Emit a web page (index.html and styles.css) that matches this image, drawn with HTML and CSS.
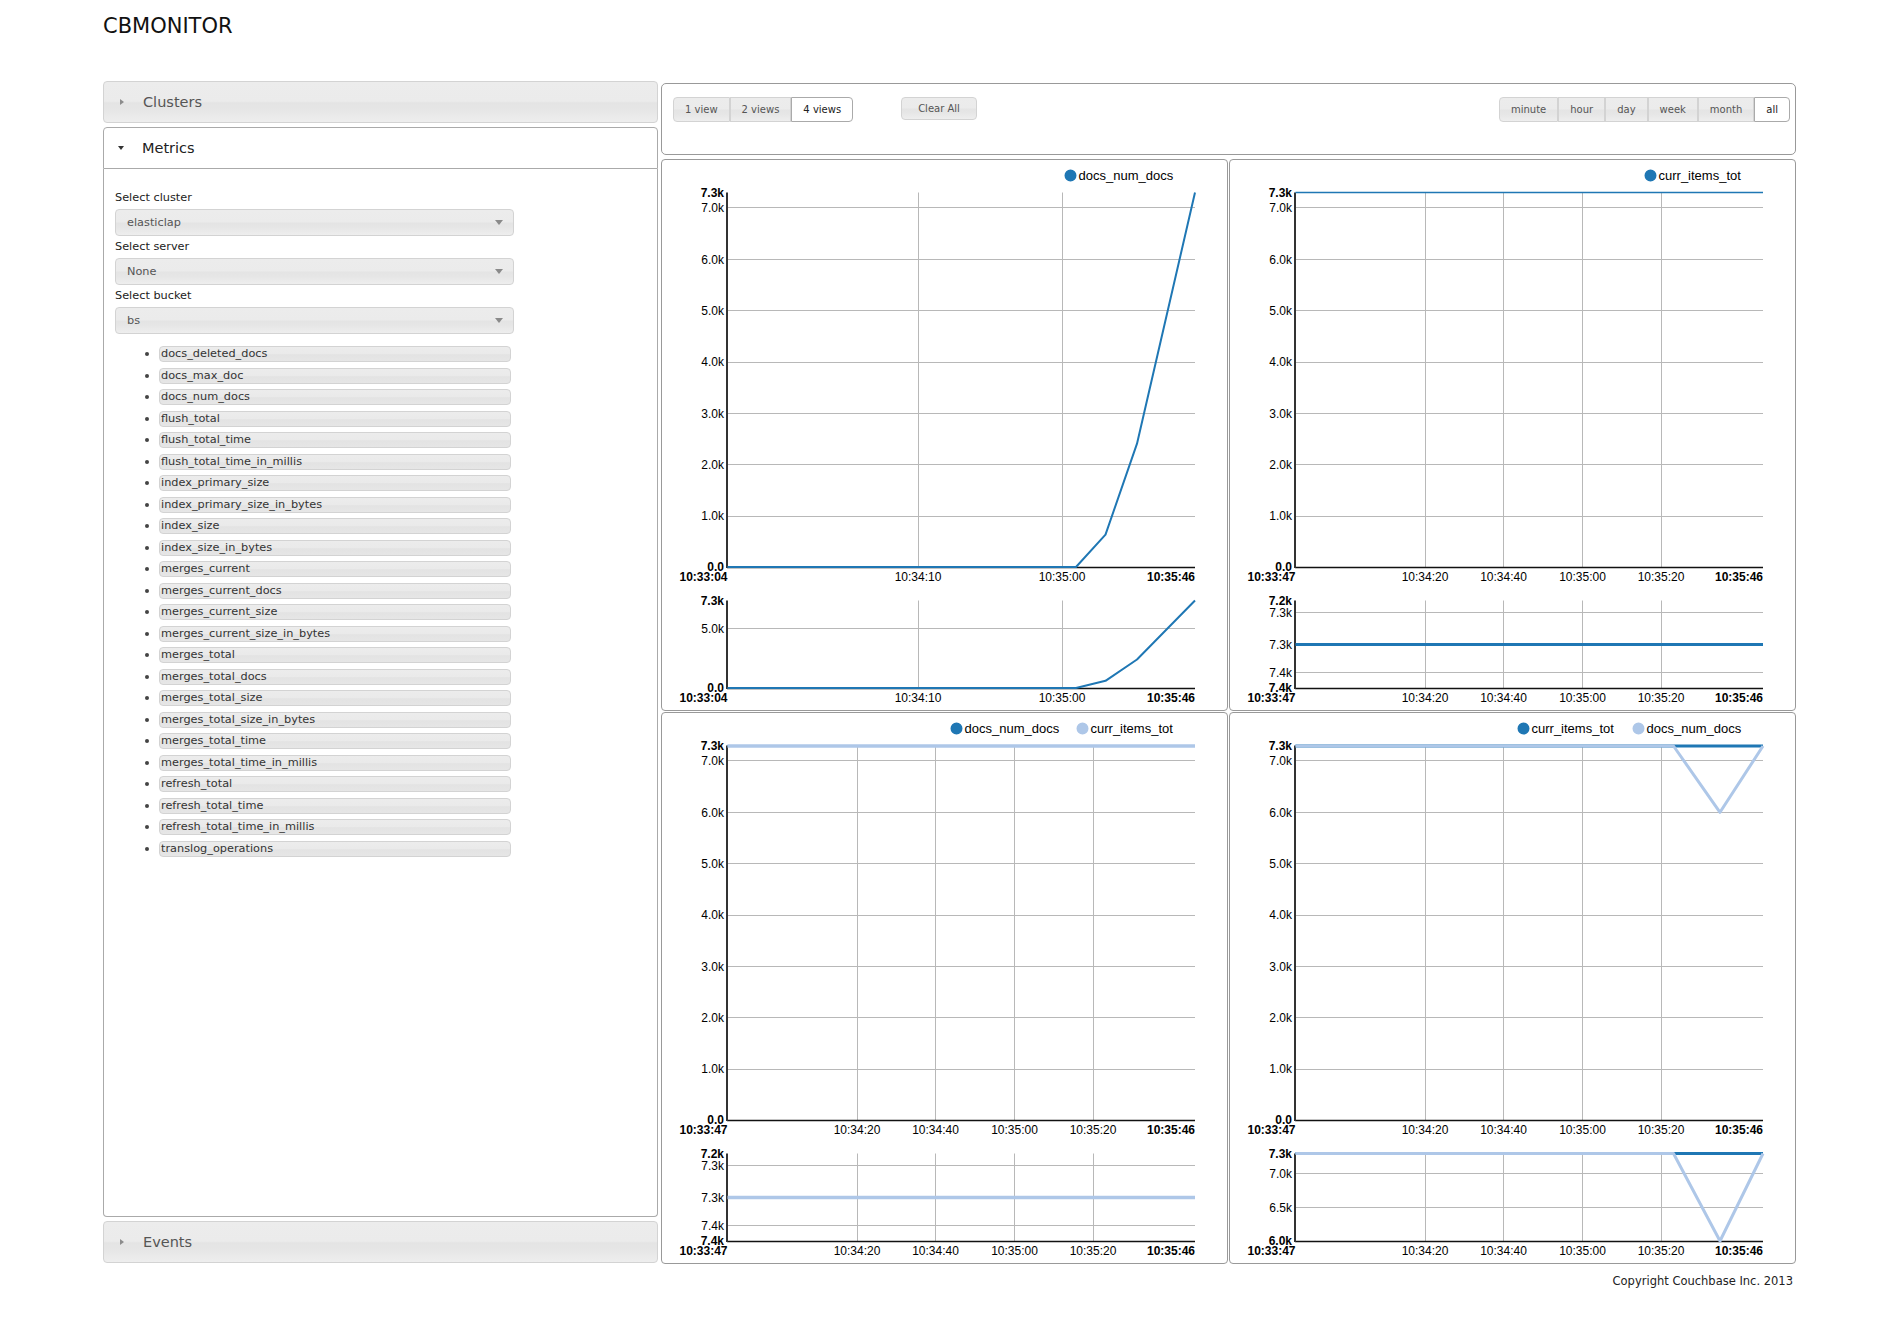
FILE: index.html
```html
<!DOCTYPE html>
<html>
<head>
<meta charset="utf-8">
<title>CBMONITOR</title>
<link rel="stylesheet" href="styles.css">
</head>
<body>
<div class="page">
  <h1 class="title">CBMONITOR</h1>
  <div class="main">
    <aside class="sidebar">
      <div class="acc-header"><span class="tri-e"></span><span class="acc-title">Clusters</span></div>
      <div class="acc-header active"><span class="tri-s"></span><span class="acc-title">Metrics</span></div>
      <div class="acc-content">
        <label class="field-label">Select cluster</label>
        <div class="select">elasticlap<span class="sel-arrow"></span></div>
        <label class="field-label">Select server</label>
        <div class="select">None<span class="sel-arrow"></span></div>
        <label class="field-label">Select bucket</label>
        <div class="select">bs<span class="sel-arrow"></span></div>
        <ul class="metric-list">
          <li><span class="pill">docs_deleted_docs</span></li>
          <li><span class="pill">docs_max_doc</span></li>
          <li><span class="pill">docs_num_docs</span></li>
          <li><span class="pill">flush_total</span></li>
          <li><span class="pill">flush_total_time</span></li>
          <li><span class="pill">flush_total_time_in_millis</span></li>
          <li><span class="pill">index_primary_size</span></li>
          <li><span class="pill">index_primary_size_in_bytes</span></li>
          <li><span class="pill">index_size</span></li>
          <li><span class="pill">index_size_in_bytes</span></li>
          <li><span class="pill">merges_current</span></li>
          <li><span class="pill">merges_current_docs</span></li>
          <li><span class="pill">merges_current_size</span></li>
          <li><span class="pill">merges_current_size_in_bytes</span></li>
          <li><span class="pill">merges_total</span></li>
          <li><span class="pill">merges_total_docs</span></li>
          <li><span class="pill">merges_total_size</span></li>
          <li><span class="pill">merges_total_size_in_bytes</span></li>
          <li><span class="pill">merges_total_time</span></li>
          <li><span class="pill">merges_total_time_in_millis</span></li>
          <li><span class="pill">refresh_total</span></li>
          <li><span class="pill">refresh_total_time</span></li>
          <li><span class="pill">refresh_total_time_in_millis</span></li>
          <li><span class="pill">translog_operations</span></li>
        </ul>
      </div>
      <div class="acc-header events"><span class="tri-e"></span><span class="acc-title">Events</span></div>
    </aside>

    <section class="right">
      <div class="toolbar">
        <div class="btnset">
          <button class="btn">1 view</button>
          <button class="btn">2 views</button>
          <button class="btn on">4 views</button>
        </div>
        <button class="btn single">Clear All</button>
        <div class="spacer"></div>
        <div class="btnset">
          <button class="btn">minute</button>
          <button class="btn">hour</button>
          <button class="btn">day</button>
          <button class="btn">week</button>
          <button class="btn">month</button>
          <button class="btn on">all</button>
        </div>
      </div>

      <div class="charts">
        <!-- top left -->
        <div class="panel">
          <svg class="chart" width="565" height="550" viewBox="1 1 565 550">
            <g class="legend">
              <circle class="d1" cx="409.5" cy="16.5" r="5"/>
              <text x="417.5" y="21">docs_num_docs</text>
            </g>
            <path class="grid" d="M66.5 48.5H534M66.5 100.5H534M66.5 151.5H534M66.5 203.5H534M66.5 254.5H534M66.5 305.5H534M66.5 357.5H534M257.5 33.5V408.5M401.5 33.5V408.5"/>
            <path class="xaxis" d="M66 408.5H534"/>
            <path class="yaxis" d="M66 33.5V409"/>
            <g class="tick">
              <text class="e b" x="63" y="37.5">7.3k</text>
              <text class="e" x="63" y="53">7.0k</text>
              <text class="e" x="63" y="104.5">6.0k</text>
              <text class="e" x="63" y="155.5">5.0k</text>
              <text class="e" x="63" y="207">4.0k</text>
              <text class="e" x="63" y="258.5">3.0k</text>
              <text class="e" x="63" y="310">2.0k</text>
              <text class="e" x="63" y="361">1.0k</text>
              <text class="e b" x="63" y="411.5">0.0</text>
              <text class="e b" x="66.5" y="422">10:33:04</text>
              <text class="m" x="257" y="422">10:34:10</text>
              <text class="m" x="401" y="422">10:35:00</text>
              <text class="e b" x="534" y="422">10:35:46</text>
            </g>
            <polyline class="l1 w2" points="66.5,408 415,408 444.5,375.6 476,284.7 534,33.5"/>

            <path class="grid" d="M66.5 469.5H534M257.5 441.5V529.5M401.5 441.5V529.5"/>
            <path class="xaxis" d="M66 529.5H534"/>
            <path class="yaxis" d="M66 441.5V530"/>
            <g class="tick">
              <text class="e b" x="63" y="445.5">7.3k</text>
              <text class="e" x="63" y="473.5">5.0k</text>
              <text class="e b" x="63" y="532.5">0.0</text>
              <text class="e b" x="66.5" y="543">10:33:04</text>
              <text class="m" x="257" y="543">10:34:10</text>
              <text class="m" x="401" y="543">10:35:00</text>
              <text class="e b" x="534" y="543">10:35:46</text>
            </g>
            <polyline class="l1 w2" points="66.5,529 415,529 444.5,521.8 476,500.5 534,441.5"/>
          </svg>
        </div>

        <!-- top right -->
        <div class="panel">
          <svg class="chart" width="565" height="550" viewBox="1 1 565 550">
            <g class="legend">
              <circle class="d1" cx="421.5" cy="16.5" r="5"/>
              <text x="429.5" y="21">curr_items_tot</text>
            </g>
            <path class="grid" d="M66.5 48.5H534M66.5 100.5H534M66.5 151.5H534M66.5 203.5H534M66.5 254.5H534M66.5 305.5H534M66.5 357.5H534M196.5 33.5V408.5M274.5 33.5V408.5M353.5 33.5V408.5M432.5 33.5V408.5"/>
            <path class="xaxis" d="M66 408.5H534"/>
            <path class="yaxis" d="M66 33.5V409"/>
            <g class="tick">
              <text class="e b" x="63" y="37.5">7.3k</text>
              <text class="e" x="63" y="53">7.0k</text>
              <text class="e" x="63" y="104.5">6.0k</text>
              <text class="e" x="63" y="155.5">5.0k</text>
              <text class="e" x="63" y="207">4.0k</text>
              <text class="e" x="63" y="258.5">3.0k</text>
              <text class="e" x="63" y="310">2.0k</text>
              <text class="e" x="63" y="361">1.0k</text>
              <text class="e b" x="63" y="411.5">0.0</text>
              <text class="e b" x="66.5" y="422">10:33:47</text>
              <text class="m" x="196" y="422">10:34:20</text>
              <text class="m" x="274.5" y="422">10:34:40</text>
              <text class="m" x="353.5" y="422">10:35:00</text>
              <text class="m" x="432" y="422">10:35:20</text>
              <text class="e b" x="534" y="422">10:35:46</text>
            </g>
            <polyline class="l1 w15" points="66.5,33.5 534,33.5"/>

            <path class="grid" d="M66.5 453.5H534M66.5 485.5H534M66.5 513.5H534M196.5 441.5V529.5M274.5 441.5V529.5M353.5 441.5V529.5M432.5 441.5V529.5"/>
            <path class="xaxis" d="M66 529.5H534"/>
            <path class="yaxis" d="M66 441.5V530"/>
            <g class="tick">
              <text class="e b" x="63" y="445.5">7.2k</text>
              <text class="e" x="63" y="457.5">7.3k</text>
              <text class="e" x="63" y="489.5">7.3k</text>
              <text class="e" x="63" y="517.5">7.4k</text>
              <text class="e b" x="63" y="532.5">7.4k</text>
              <text class="e b" x="66.5" y="543">10:33:47</text>
              <text class="m" x="196" y="543">10:34:20</text>
              <text class="m" x="274.5" y="543">10:34:40</text>
              <text class="m" x="353.5" y="543">10:35:00</text>
              <text class="m" x="432" y="543">10:35:20</text>
              <text class="e b" x="534" y="543">10:35:46</text>
            </g>
            <polyline class="l1 w3" points="66.5,485.5 534,485.5"/>
          </svg>
        </div>

        <!-- bottom left -->
        <div class="panel">
          <svg class="chart" width="565" height="550" viewBox="1 1 565 550">
            <g class="legend">
              <circle class="d1" cx="295.5" cy="16.5" r="5"/>
              <text x="303.5" y="21">docs_num_docs</text>
              <circle class="d2" cx="421.5" cy="16.5" r="5"/>
              <text x="429.5" y="21">curr_items_tot</text>
            </g>
            <path class="grid" d="M66.5 48.5H534M66.5 100.5H534M66.5 151.5H534M66.5 203.5H534M66.5 254.5H534M66.5 305.5H534M66.5 357.5H534M196.5 33.5V408.5M274.5 33.5V408.5M353.5 33.5V408.5M432.5 33.5V408.5"/>
            <path class="xaxis" d="M66 408.5H534"/>
            <path class="yaxis" d="M66 33.5V409"/>
            <g class="tick">
              <text class="e b" x="63" y="37.5">7.3k</text>
              <text class="e" x="63" y="53">7.0k</text>
              <text class="e" x="63" y="104.5">6.0k</text>
              <text class="e" x="63" y="155.5">5.0k</text>
              <text class="e" x="63" y="207">4.0k</text>
              <text class="e" x="63" y="258.5">3.0k</text>
              <text class="e" x="63" y="310">2.0k</text>
              <text class="e" x="63" y="361">1.0k</text>
              <text class="e b" x="63" y="411.5">0.0</text>
              <text class="e b" x="66.5" y="422">10:33:47</text>
              <text class="m" x="196" y="422">10:34:20</text>
              <text class="m" x="274.5" y="422">10:34:40</text>
              <text class="m" x="353.5" y="422">10:35:00</text>
              <text class="m" x="432" y="422">10:35:20</text>
              <text class="e b" x="534" y="422">10:35:46</text>
            </g>
            <polyline class="l1 w2" points="66.5,34 534,34"/>
            <polyline class="l2 w35" points="66.5,34 534,34"/>

            <path class="grid" d="M66.5 453.5H534M66.5 485.5H534M66.5 513.5H534M196.5 441.5V529.5M274.5 441.5V529.5M353.5 441.5V529.5M432.5 441.5V529.5"/>
            <path class="xaxis" d="M66 529.5H534"/>
            <path class="yaxis" d="M66 441.5V530"/>
            <g class="tick">
              <text class="e b" x="63" y="445.5">7.2k</text>
              <text class="e" x="63" y="457.5">7.3k</text>
              <text class="e" x="63" y="489.5">7.3k</text>
              <text class="e" x="63" y="517.5">7.4k</text>
              <text class="e b" x="63" y="532.5">7.4k</text>
              <text class="e b" x="66.5" y="543">10:33:47</text>
              <text class="m" x="196" y="543">10:34:20</text>
              <text class="m" x="274.5" y="543">10:34:40</text>
              <text class="m" x="353.5" y="543">10:35:00</text>
              <text class="m" x="432" y="543">10:35:20</text>
              <text class="e b" x="534" y="543">10:35:46</text>
            </g>
            <polyline class="l2 w35" points="66.5,485.5 534,485.5"/>
          </svg>
        </div>

        <!-- bottom right -->
        <div class="panel">
          <svg class="chart" width="565" height="550" viewBox="1 1 565 550">
            <g class="legend">
              <circle class="d1" cx="294.5" cy="16.5" r="5"/>
              <text x="302.5" y="21">curr_items_tot</text>
              <circle class="d2" cx="409.5" cy="16.5" r="5"/>
              <text x="417.5" y="21">docs_num_docs</text>
            </g>
            <path class="grid" d="M66.5 48.5H534M66.5 100.5H534M66.5 151.5H534M66.5 203.5H534M66.5 254.5H534M66.5 305.5H534M66.5 357.5H534M196.5 33.5V408.5M274.5 33.5V408.5M353.5 33.5V408.5M432.5 33.5V408.5"/>
            <path class="xaxis" d="M66 408.5H534"/>
            <path class="yaxis" d="M66 33.5V409"/>
            <g class="tick">
              <text class="e b" x="63" y="37.5">7.3k</text>
              <text class="e" x="63" y="53">7.0k</text>
              <text class="e" x="63" y="104.5">6.0k</text>
              <text class="e" x="63" y="155.5">5.0k</text>
              <text class="e" x="63" y="207">4.0k</text>
              <text class="e" x="63" y="258.5">3.0k</text>
              <text class="e" x="63" y="310">2.0k</text>
              <text class="e" x="63" y="361">1.0k</text>
              <text class="e b" x="63" y="411.5">0.0</text>
              <text class="e b" x="66.5" y="422">10:33:47</text>
              <text class="m" x="196" y="422">10:34:20</text>
              <text class="m" x="274.5" y="422">10:34:40</text>
              <text class="m" x="353.5" y="422">10:35:00</text>
              <text class="m" x="432" y="422">10:35:20</text>
              <text class="e b" x="534" y="422">10:35:46</text>
            </g>
            <polyline class="l1 w3" points="66.5,34 534,34"/>
            <polyline class="l2 w3" points="66.5,34 444.5,34 491,100.3 534,34"/>

            <path class="grid" d="M66.5 461.5H534M66.5 495.5H534M196.5 441.5V529.5M274.5 441.5V529.5M353.5 441.5V529.5M432.5 441.5V529.5"/>
            <path class="xaxis" d="M66 529.5H534"/>
            <path class="yaxis" d="M66 441.5V530"/>
            <g class="tick">
              <text class="e b" x="63" y="445.5">7.3k</text>
              <text class="e" x="63" y="466">7.0k</text>
              <text class="e" x="63" y="499.5">6.5k</text>
              <text class="e b" x="63" y="532.5">6.0k</text>
              <text class="e b" x="66.5" y="543">10:33:47</text>
              <text class="m" x="196" y="543">10:34:20</text>
              <text class="m" x="274.5" y="543">10:34:40</text>
              <text class="m" x="353.5" y="543">10:35:00</text>
              <text class="m" x="432" y="543">10:35:20</text>
              <text class="e b" x="534" y="543">10:35:46</text>
            </g>
            <polyline class="l1 w3" points="66.5,441.5 534,441.5"/>
            <polyline class="l2 w3" points="66.5,441.5 444.5,441.5 491,529 534,441.5"/>
          </svg>
        </div>
      </div>
    </section>
  </div>
  <footer class="footer">Copyright Couchbase Inc. 2013</footer>
</div>
</body>
</html>
```

FILE: styles.css
```css
body {
  margin: 0;
  background: #ffffff;
  font-family: "DejaVu Sans", Verdana, sans-serif;
  color: #222222;
}

.page {
  padding: 14px 0 0 103px;
  width: 1693px;
}

.title {
  margin: 0 0 43px;
  font-size: 21px;
  line-height: 24px;
  font-weight: normal;
  color: #111111;
}

.main {
  display: flex;
  align-items: flex-start;
  gap: 3px;
}

/* ---------- sidebar / accordion ---------- */
.sidebar {
  width: 555px;
  flex: none;
}

.acc-header {
  box-sizing: border-box;
  height: 42px;
  display: flex;
  align-items: center;
  padding-left: 14px;
  font-size: 14.5px;
  color: #555555;
  border: 1px solid #d3d3d3;
  border-radius: 4px;
  background: linear-gradient(to bottom, #ececec 0%, #ebebeb 48%, #e4e4e4 52%, #e6e6e6 70%, #eeeeee 100%);
}

.acc-header.active {
  margin-top: 4px;
  background: #ffffff;
  border-color: #aaaaaa;
  color: #212121;
  border-radius: 4px 4px 0 0;
}

.acc-header.events {
  margin-top: 4px;
}

.acc-title {
  margin-left: 19px;
}

.tri-e {
  width: 0;
  height: 0;
  border-left: 4px solid #8c8c8c;
  border-top: 3.5px solid transparent;
  border-bottom: 3.5px solid transparent;
  margin-left: 2px;
}

.tri-s {
  width: 0;
  height: 0;
  border-top: 4px solid #333333;
  border-left: 3.5px solid transparent;
  border-right: 3.5px solid transparent;
  margin-right: -1px;
}

.acc-content {
  box-sizing: border-box;
  height: 1048px;
  border: 1px solid #aaaaaa;
  border-top: 0;
  border-radius: 0 0 4px 4px;
  padding: 22px 0 0 11px;
}

.field-label {
  display: block;
  font-size: 11.3px;
  line-height: 14px;
  margin-bottom: 4px;
  color: #222222;
}

.select {
  position: relative;
  box-sizing: border-box;
  width: 399px;
  height: 27px;
  line-height: 25px;
  padding-left: 11px;
  margin-bottom: 4px;
  font-size: 11.3px;
  color: #555555;
  border: 1px solid #d3d3d3;
  border-radius: 4px;
  background: linear-gradient(to bottom, #ececec 0%, #ebebeb 48%, #e4e4e4 52%, #e6e6e6 70%, #eeeeee 100%);
}

.sel-arrow {
  position: absolute;
  right: 10px;
  top: 10px;
  width: 0;
  height: 0;
  border-top: 5px solid #8a8a8a;
  border-left: 4px solid transparent;
  border-right: 4px solid transparent;
}

.metric-list {
  list-style: none;
  margin: 12px 0 0;
  padding: 0 0 0 30px;
}

.metric-list li {
  display: flex;
  align-items: center;
  height: 16px;
  margin-bottom: 5.5px;
}

.metric-list li::before {
  content: "";
  width: 4px;
  height: 4px;
  border-radius: 50%;
  background: #444444;
  margin-right: 10px;
  flex: none;
}

.pill {
  box-sizing: border-box;
  display: block;
  width: 352px;
  height: 16px;
  line-height: 14px;
  padding-left: 1px;
  font-size: 11.3px;
  color: #333333;
  border: 1px solid #d3d3d3;
  border-radius: 4px;
  background: linear-gradient(to bottom, #ececec 0%, #eaeaea 48%, #e3e3e3 55%, #e6e6e6 100%);
}

/* ---------- right column ---------- */
.right {
  width: 1135px;
  flex: none;
  margin-top: 2px;
}

.toolbar {
  box-sizing: border-box;
  height: 72px;
  display: flex;
  align-items: flex-start;
  padding: 13px 5px 0 11px;
  border: 1px solid #999999;
  border-radius: 5px;
}

.btnset {
  display: flex;
}

.spacer {
  flex: 1;
}

.btn {
  box-sizing: border-box;
  height: 25px;
  margin: 0;
  padding: 0 11px;
  font-family: "DejaVu Sans", Verdana, sans-serif;
  font-size: 10px;
  line-height: 23px;
  color: #555555;
  border: 1px solid #d3d3d3;
  border-radius: 0;
  background: linear-gradient(to bottom, #ececec 0%, #ebebeb 48%, #e4e4e4 52%, #e6e6e6 70%, #eeeeee 100%);
}

.btnset .btn:first-child {
  border-radius: 4px 0 0 4px;
}

.btnset .btn:last-child {
  border-radius: 0 4px 4px 0;
}

.btn.on {
  background: #ffffff;
  border-color: #aaaaaa;
  color: #212121;
}

.btn.single {
  height: 23px;
  line-height: 20px;
  padding: 0 16px;
  margin-left: 48px;
  border-radius: 4px;
}

.charts {
  display: grid;
  grid-template-columns: 567px 567px;
  grid-auto-rows: 552px;
  gap: 1px;
  margin-top: 4px;
}

.panel {
  box-sizing: border-box;
  border: 1px solid #999999;
  border-radius: 4px;
  overflow: hidden;
}

.chart {
  display: block;
  font-family: "Liberation Sans", Arial, sans-serif;
}

.chart .legend text {
  font-size: 13px;
  fill: #000000;
}

.chart .d1 {
  fill: #1f77b4;
  stroke: #1f77b4;
  stroke-width: 2;
}

.chart .d2 {
  fill: #aec7e8;
  stroke: #aec7e8;
  stroke-width: 2;
}

.chart .grid {
  fill: none;
  stroke: #b8b8b8;
  stroke-width: 1;
}

.chart .xaxis {
  fill: none;
  stroke: #111111;
  stroke-width: 1.5;
}

.chart .yaxis {
  fill: none;
  stroke: #333333;
  stroke-width: 2;
}

.chart .tick text {
  font-size: 12px;
  fill: #000000;
}

.chart .tick .b {
  font-weight: bold;
}

.chart .e {
  text-anchor: end;
}

.chart .m {
  text-anchor: middle;
}

.chart .l1 {
  fill: none;
  stroke: #1f77b4;
  stroke-linejoin: round;
}

.chart .l2 {
  fill: none;
  stroke: #aec7e8;
  stroke-linejoin: round;
}

.chart .w15 { stroke-width: 1.5; }
.chart .w2 { stroke-width: 2; }
.chart .w3 { stroke-width: 3; }
.chart .w35 { stroke-width: 3.5; }

.footer {
  margin-top: 10px;
  padding-right: 3px;
  text-align: right;
  font-size: 11.5px;
  line-height: 14px;
  color: #222222;
}
```
